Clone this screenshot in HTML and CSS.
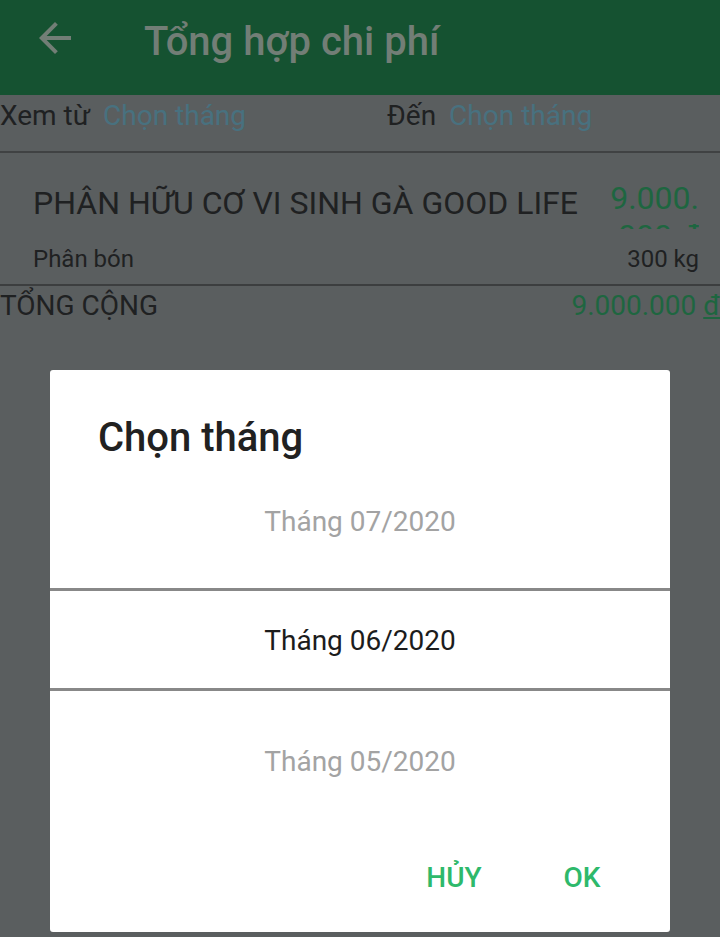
FILE: index.html
```html
<!DOCTYPE html>
<html lang="vi">
<head>
<meta charset="utf-8">
<title>Tổng hợp chi phí</title>
<link rel="stylesheet" href="styles.css">
</head>
<body>
<div class="screen">
  <header class="appbar">
    <svg class="back" viewBox="0 0 24 24" width="48" height="48" aria-hidden="true">
      <path d="M20 11H7.83l5.59-5.59L12 4l-8 8 8 8 1.41-1.41L7.83 13H20v-2z"/>
    </svg>
    <h1 class="title">Tổng hợp chi phí</h1>
  </header>

  <div class="filter">
    <div class="filter-group">
      <span class="label">Xem từ</span>
      <span class="pick">Chọn tháng</span>
    </div>
    <div class="filter-group">
      <span class="label">Đến</span>
      <span class="pick">Chọn tháng</span>
    </div>
  </div>
  <div class="rule"></div>

  <div class="item">
    <div class="item-top">
      <div class="item-name">PHÂN HỮU CƠ VI SINH GÀ GOOD LIFE</div>
      <div class="item-price">9.000.000 đ</div>
    </div>
    <div class="item-sub">
      <span>Phân bón</span>
      <span>300 kg</span>
    </div>
  </div>
  <div class="rule thin"></div>

  <div class="total">
    <span class="total-label">TỔNG CỘNG</span>
    <span class="total-value">9.000.000 <u>đ</u></span>
  </div>

  <div class="dialog">
    <h2 class="dialog-title">Chọn tháng</h2>
    <div class="picker">
      <div class="pick-item prev">Tháng 07/2020</div>
      <div class="pick-item current">Tháng 06/2020</div>
      <div class="pick-item next">Tháng 05/2020</div>
    </div>
    <div class="actions">
      <button class="btn">HỦY</button>
      <button class="btn">OK</button>
    </div>
  </div>
</div>
</body>
</html>
```

FILE: styles.css
```css
* { box-sizing: border-box; }

html, body {
  margin: 0;
  padding: 0;
}

body {
  width: 720px;
  height: 937px;
  overflow: hidden;
  background: #5a5e5f;
  font-family: Roboto, "Noto Sans", "Liberation Sans", sans-serif;
  color: #1f2122;
}

.screen {
  position: relative;
  width: 720px;
  height: 937px;
}

/* App bar */
.appbar {
  height: 95px;
  background: #155231;
  display: flex;
  align-items: flex-start;
  padding: 14px 0 0 31px;
}

.back {
  width: 48px;
  height: 48px;
  fill: #727e76;
  flex: none;
}

.title {
  margin: 4px 0 0 65px;
  font-size: 40px;
  line-height: 48px;
  font-weight: 500;
  color: #727e76;
}

/* Filter row */
.filter {
  height: 56px;
  display: grid;
  grid-template-columns: 387px 1fr;
  padding-top: 1px;
  font-size: 28px;
  line-height: 40px;
}

.filter-group {
  display: flex;
  gap: 13px;
}

.label { color: #1f2122; }
.pick { color: #48717f; }

.rule {
  height: 2px;
  background: #404243;
}

.rule.thin {
  height: 2px;
  background: #3c3e3f;
}

/* Item */
.item {
  padding: 26px 21px 11px 33px;
}

.item-top {
  display: flex;
  align-items: flex-start;
  justify-content: space-between;
}

.item-name {
  margin-top: 6px;
  font-size: 32px;
  line-height: 36px;
  white-space: nowrap;
}

.item-price {
  width: 90px;
  height: 50px;
  overflow: hidden;
  font-size: 32px;
  line-height: 38px;
  color: #1e6640;
  text-align: right;
  word-break: break-all;
}

.item-sub {
  margin-top: 16px;
  display: flex;
  justify-content: space-between;
  font-size: 24px;
  line-height: 28px;
}

/* Total */
.total {
  display: flex;
  justify-content: space-between;
  padding-top: 2px;
  font-size: 28px;
  line-height: 36px;
}

.total-value {
  color: #1e6640;
  white-space: nowrap;
}

/* Dialog */
.dialog {
  position: absolute;
  left: 50px;
  top: 370px;
  width: 620px;
  background: #ffffff;
  border-radius: 3px;
  padding-top: 45px;
}

.dialog-title {
  margin: 0 0 1px 48px;
  font-size: 40px;
  line-height: 46px;
  font-weight: 500;
  color: #212121;
}

.picker {
  text-align: center;
  font-size: 28px;
  line-height: 33px;
}

.pick-item.prev {
  height: 126px;
  padding-top: 43px;
  color: #a3a3a3;
}

.pick-item.current {
  height: 103px;
  padding-top: 33px;
  border-top: 3px solid #888888;
  border-bottom: 3px solid #888888;
  color: #1c1c1c;
}

.pick-item.next {
  height: 88px;
  padding-top: 54px;
  color: #a3a3a3;
}

.actions {
  display: flex;
  justify-content: flex-end;
  padding: 82px 24px 38px 0;
}

.btn {
  width: 128px;
  margin: 0;
  padding: 0;
  border: 0;
  background: transparent;
  font-family: inherit;
  font-size: 28px;
  line-height: 33px;
  font-weight: 500;
  color: #2eb96b;
  text-align: center;
}
```
